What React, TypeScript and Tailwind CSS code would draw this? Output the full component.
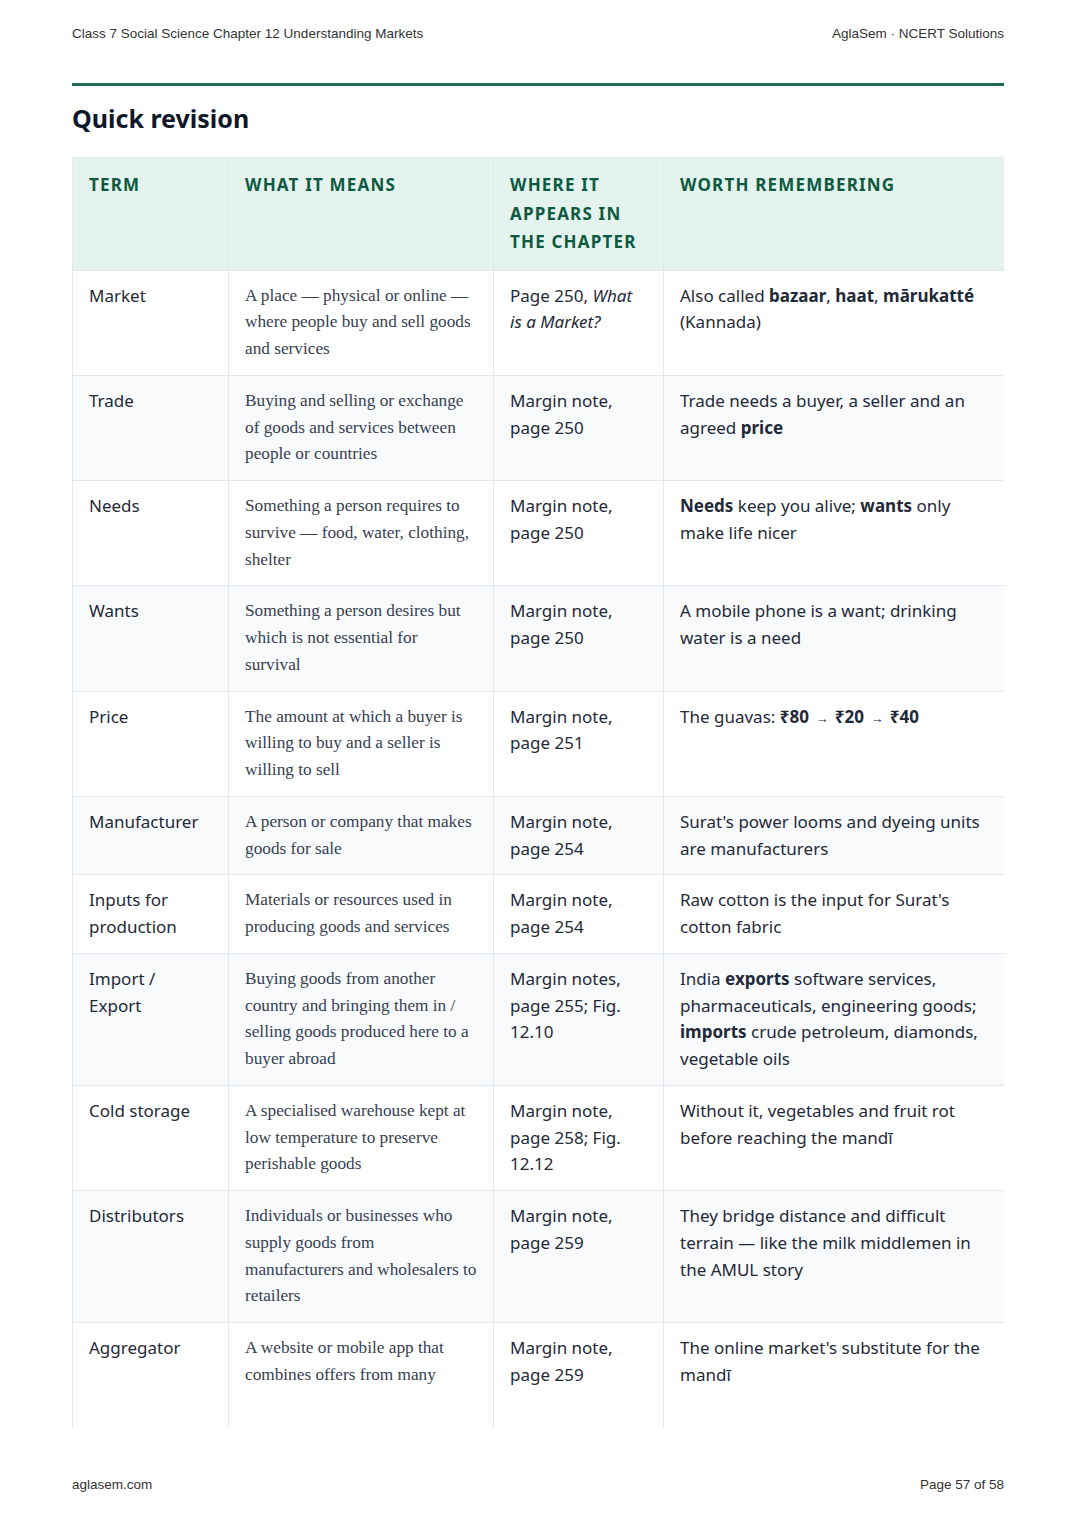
import React from 'react'

type Row = {
  term: React.ReactNode
  means: React.ReactNode
  where: React.ReactNode
  remember: React.ReactNode
}

const Arrow = () => <span className="text-[13px] font-normal mx-[2px]">→</span>

const ROWS: Row[] = [
  {
    term: 'Market',
    means: 'A place — physical or online — where people buy and sell goods and services',
    where: <>Page 250, <em>What is a Market?</em></>,
    remember: <>Also called <b>bazaar</b>, <b>haat</b>, <b>mārukatté</b> (Kannada)</>,
  },
  {
    term: 'Trade',
    means: 'Buying and selling or exchange of goods and services between people or countries',
    where: 'Margin note, page 250',
    remember: <>Trade needs a buyer, a seller and an agreed <b>price</b></>,
  },
  {
    term: 'Needs',
    means: 'Something a person requires to survive — food, water, clothing, shelter',
    where: 'Margin note, page 250',
    remember: <><b>Needs</b> keep you alive; <b>wants</b> only make life nicer</>,
  },
  {
    term: 'Wants',
    means: 'Something a person desires but which is not essential for survival',
    where: 'Margin note, page 250',
    remember: 'A mobile phone is a want; drinking water is a need',
  },
  {
    term: 'Price',
    means: 'The amount at which a buyer is willing to buy and a seller is willing to sell',
    where: 'Margin note, page 251',
    remember: <>The guavas: <b>₹80</b> <Arrow /> <b>₹20</b> <Arrow /> <b>₹40</b></>,
  },
  {
    term: 'Manufacturer',
    means: 'A person or company that makes goods for sale',
    where: 'Margin note, page 254',
    remember: "Surat's power looms and dyeing units are manufacturers",
  },
  {
    term: 'Inputs for production',
    means: 'Materials or resources used in producing goods and services',
    where: 'Margin note, page 254',
    remember: "Raw cotton is the input for Surat's cotton fabric",
  },
  {
    term: 'Import / Export',
    means: 'Buying goods from another country and bringing them in / selling goods produced here to a buyer abroad',
    where: 'Margin notes, page 255; Fig. 12.10',
    remember: <>India <b>exports</b> software services, pharmaceuticals, engineering goods; <b>imports</b> crude petroleum, diamonds, vegetable oils</>,
  },
  {
    term: 'Cold storage',
    means: 'A specialised warehouse kept at low temperature to preserve perishable goods',
    where: 'Margin note, page 258; Fig. 12.12',
    remember: 'Without it, vegetables and fruit rot before reaching the mandī',
  },
  {
    term: 'Distributors',
    means: 'Individuals or businesses who supply goods from manufacturers and wholesalers to retailers',
    where: 'Margin note, page 259',
    remember: 'They bridge distance and difficult terrain — like the milk middlemen in the AMUL story',
  },
  {
    term: 'Aggregator',
    means: 'A website or mobile app that combines offers from many',
    where: 'Margin note, page 259',
    remember: "The online market's substitute for the mandī",
  },
]

const HEADS = ['Term', 'What it means', 'Where it appears in the chapter', 'Worth remembering']

export default function App() {
  const last = ROWS.length - 1
  return (
    <div className="w-[1076px] h-[1522px] bg-white px-[72px] flex flex-col" style={{ fontFamily: '"Noto Sans", sans-serif' }}>
      {/* Running header */}
      <div className="pt-[26px] flex justify-between text-[13.5px] leading-[16px] text-[#333]"
           style={{ fontFamily: '"Liberation Sans", Arial, sans-serif' }}>
        <span>Class 7 Social Science Chapter 12 Understanding Markets</span>
        <span>AglaSem · NCERT Solutions</span>
      </div>
      <div className="mt-[41px] h-[3px] bg-[#1f6b57]" />

      <h2 className="mt-[16px] text-[25px] leading-[32px] font-bold text-[#0f172a]">Quick revision</h2>

      {/* table continues on the next page, so it is cut off here */}
      <div className="mt-[23px] h-[1271px] overflow-hidden">
        <table className="w-[932px] border-collapse table-fixed">
          <colgroup>
            <col className="w-[156px]" />
            <col className="w-[265px]" />
            <col className="w-[170px]" />
            <col className="w-[341px]" />
          </colgroup>
          <thead>
            <tr className="bg-[#e4f3ee]">
              {HEADS.map(h => (
                <th key={h}
                    className="border border-[#e2e8f0] px-4 py-[13px] text-left align-top text-[17px] leading-[28.5px] font-bold uppercase tracking-[0.07em] text-[#0d5a40]">
                  {h}
                </th>
              ))}
            </tr>
          </thead>
          <tbody>
            {ROWS.map((r, i) => {
              const cell = i === last
                ? 'border border-b-0 border-[#e2e8f0] px-4 py-3 align-top h-[130px]'
                : 'border border-[#e2e8f0] px-4 py-3 align-top'
              return (
                <tr key={i} className={i % 2 === 1 ? 'bg-[#f8fafc]' : 'bg-white'}>
                  <td className={`${cell} text-[17px] leading-[26.75px] text-[#1f2937]`}>{r.term}</td>
                  <td className={`${cell} text-[17.25px] leading-[26.75px] text-[#374151]`}
                      style={{ fontFamily: '"Liberation Serif", "Times New Roman", serif' }}>{r.means}</td>
                  <td className={`${cell} text-[17px] leading-[26.75px] text-[#1f2937]`}>{r.where}</td>
                  <td className={`${cell} text-[17px] leading-[26.75px] text-[#1f2937]`}>{r.remember}</td>
                </tr>
              )
            })}
          </tbody>
        </table>
      </div>

      {/* Running footer */}
      <div className="mt-[49px] flex justify-between text-[13.5px] leading-[16px] text-[#333]"
           style={{ fontFamily: '"Liberation Sans", Arial, sans-serif' }}>
        <span>aglasem.com</span>
        <span>Page 57 of 58</span>
      </div>
    </div>
  )
}
